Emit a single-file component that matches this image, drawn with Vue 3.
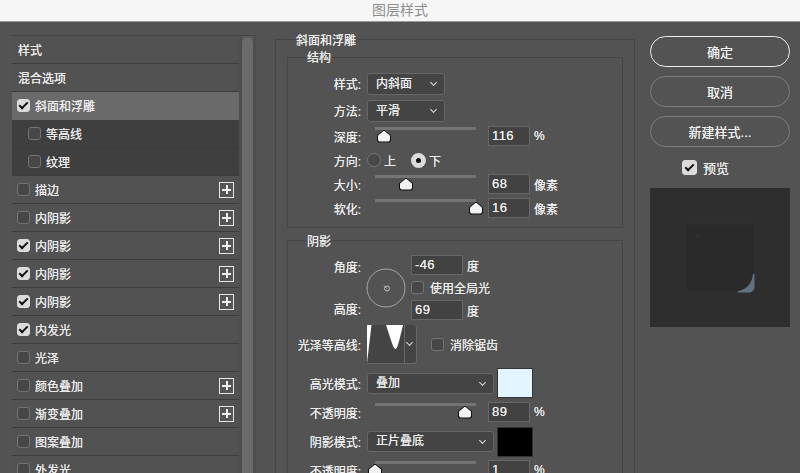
<template>
  <div class="dialog">
    <div class="titlebar">图层样式</div>
    <div class="body">
      <aside class="side">
        <ul class="fx-list">
          <li
            v-for="fx in effects"
            :key="fx.id"
            class="fx"
            :class="{ selected: fx.selected, sub: fx.sub }"
          >
            <span v-if="fx.check !== undefined" class="check" :class="{ on: fx.check }"></span>
            <span class="fx-name">{{ fx.name }}</span>
            <span v-if="fx.plus" class="plus"></span>
          </li>
        </ul>
        <div class="scroll"><div class="scroll-thumb"></div></div>
      </aside>

      <main class="form">
        <div class="legend outer-legend">斜面和浮雕</div>

        <section class="group first">
          <div class="legend">结构</div>
          <div class="row tall">
            <label class="lab">样式:</label>
            <div class="select small">内斜面</div>
          </div>
          <div class="row tall">
            <label class="lab">方法:</label>
            <div class="select small">平滑</div>
          </div>
          <div class="row">
            <label class="lab">深度:</label>
            <div class="slider"><span class="thumb" :style="{ left: '9px' }"></span></div>
            <div class="num">116</div>
            <span class="unit">%</span>
          </div>
          <div class="row">
            <label class="lab">方向:</label>
            <span class="radio"></span>
            <span class="radio-text">上</span>
            <span class="radio on"></span>
            <span class="radio-text">下</span>
          </div>
          <div class="row">
            <label class="lab">大小:</label>
            <div class="slider"><span class="thumb" :style="{ left: '31px' }"></span></div>
            <div class="num">68</div>
            <span class="unit">像素</span>
          </div>
          <div class="row">
            <label class="lab">软化:</label>
            <div class="slider"><span class="thumb" :style="{ left: '101px' }"></span></div>
            <div class="num">16</div>
            <span class="unit">像素</span>
          </div>
        </section>

        <section class="group second">
          <div class="legend">阴影</div>
          <div class="angle">
            <div class="angle-labels">
              <label class="lab">角度:</label>
              <label class="lab">高度:</label>
            </div>
            <svg class="dial" width="40" height="40" viewBox="0 0 40 40">
              <circle cx="20" cy="20" r="19" fill="none" stroke="#a9a9a9" stroke-width="1" />
              <circle cx="21" cy="20.5" r="2.5" fill="none" stroke="#bdbdbd" stroke-width="1" />
              <path d="M18 17.500 L21 20.500" stroke="#bdbdbd" stroke-width="1" />
            </svg>
            <div class="angle-fields">
              <div class="field-line">
                <div class="num wide">-46</div>
                <span class="unit">度</span>
              </div>
              <div class="field-line">
                <span class="check"></span>
                <span class="check-text">使用全局光</span>
              </div>
              <div class="field-line">
                <div class="num wide">69</div>
                <span class="unit">度</span>
              </div>
            </div>
          </div>

          <div class="row contour-row">
            <label class="lab">光泽等高线:</label>
            <div class="contour">
              <svg width="37" height="38" viewBox="0 0 37 38">
                <path d="M0 0 H4.5 L0 38 Z" fill="#fff" />
                <path d="M19 0 H36 C34 8 31 24 28.5 24 C26 24 22 8 19 0 Z" fill="#fff" />
              </svg>
              <div class="contour-arrow"></div>
            </div>
            <span class="check aa"></span>
            <span class="check-text">消除锯齿</span>
          </div>

          <div class="row swatch-row">
            <label class="lab">高光模式:</label>
            <div class="select large">叠加</div>
            <div class="swatch light"></div>
          </div>
          <div class="row opacity-row">
            <label class="lab">不透明度:</label>
            <div class="slider"><span class="thumb" :style="{ left: '90px' }"></span></div>
            <div class="num">89</div>
            <span class="unit">%</span>
          </div>
          <div class="row swatch-row shadow">
            <label class="lab">阴影模式:</label>
            <div class="select large">正片叠底</div>
            <div class="swatch dark"></div>
          </div>
          <div class="row opacity-row">
            <label class="lab">不透明度:</label>
            <div class="slider"><span class="thumb" :style="{ left: '0px' }"></span></div>
            <div class="num">1</div>
            <span class="unit">%</span>
          </div>
        </section>
      </main>

      <aside class="actions">
        <button class="btn primary">确定</button>
        <button class="btn">取消</button>
        <button class="btn">新建样式...</button>
        <div class="preview-toggle">
          <span class="check on big"></span>
          <span class="preview-text">预览</span>
        </div>
        <div class="preview">
          <svg width="140" height="139" viewBox="0 0 140 139">
            <defs>
              <filter id="soft" x="-30%" y="-30%" width="160%" height="160%">
                <feGaussianBlur stdDeviation="0.6" />
              </filter>
            </defs>
            <path d="M36 36 H104 V104 H36 Z" fill="#2b2b2b" stroke="#2c3137" stroke-width="1.5" filter="url(#soft)" />
            <path d="M103.500 38 V90" fill="none" stroke="#4a5864" stroke-width="1.5" filter="url(#soft)" />
            <path d="M46 103.500 H90" fill="none" stroke="#5a6976" stroke-width="1.5" filter="url(#soft)" />
            <path d="M104.500 86 V99 C104.500 102.500 102 104.500 98 104.500 H88 V103 C96 102 102 96 103 86 Z" fill="#62727f" filter="url(#soft)" />
            <circle cx="48" cy="48" r="1" fill="#3e3633" />
          </svg>
        </div>
      </aside>
    </div>
  </div>
</template>

<script setup>
const names = [
  ['样式'],
  ['混合选项'],
  ['斜面和浮雕', true, false, true],
  ['等高线', false, false, false, true],
  ['纹理', false, false, false, true],
  ['描边', false, true],
  ['内阴影', false, true],
  ['内阴影', true, true],
  ['内阴影', true, true],
  ['内阴影', true, true],
  ['内发光', true],
  ['光泽', false],
  ['颜色叠加', false, true],
  ['渐变叠加', false, true],
  ['图案叠加', false],
  ['外发光', false]
]

const effects = names.map(([name, check, plus, selected, sub], id) => ({
  id,
  name,
  check,
  plus,
  selected,
  sub
}))
</script>

<style scoped>
.dialog {
  width: 800px;
  height: 473px;
  overflow: hidden;
  background: #535353;
  color: #ececec;
  font-family: "Liberation Sans", "Noto Sans CJK SC", sans-serif;
  font-size: 12px;
  text-shadow: 0 0 0.5px #ececec;
}
.titlebar {
  height: 21px;
  line-height: 20px;
  background: #f6f6f6;
  border-bottom: 1px solid #9c9c9c;
  color: #8e8e8e;
  font-size: 14px;
  text-align: center;
  text-shadow: none;
}
.body {
  display: flex;
  align-items: flex-start;
  padding-top: 13px;
}

/* left list */
.side {
  display: flex;
  flex: none;
  width: 244px;
  margin-left: 12px;
  background: #4e4e4e;
  border-top: 1px solid #444;
}
.fx-list {
  width: 227px;
  margin: 0;
  padding: 0;
  list-style: none;
}
.fx {
  display: flex;
  align-items: center;
  height: 27px;
  padding-left: 5px;
  padding-right: 5px;
  background: #525252;
  border-bottom: 1px solid #3d3d3d;
}
.fx.selected {
  background: #6a6a6a;
  border-bottom-color: #6a6a6a;
}
.fx.sub {
  padding-left: 16px;
  background: #3f3f3f;
  border-bottom-color: #3b3b3b;
}
.fx-name {
  margin-left: 5px;
}
.fx:nth-child(-n + 2) .fx-name {
  margin-left: 1px;
}
.plus {
  width: 13px;
  height: 14px;
  margin-left: auto;
  border: 1px solid #e6e6e6;
  background:
    linear-gradient(#eee, #eee) center / 9px 2px no-repeat,
    linear-gradient(#eee, #eee) center / 2px 9px no-repeat,
    #555;
}
.scroll {
  width: 11px;
  margin-left: 3px;
  background: #5a5a5a;
}
.scroll-thumb {
  height: 440px;
  margin-top: 2px;
  border-radius: 5px;
  background: #6b6b6b;
}

/* check and radio */
.check {
  position: relative;
  flex: none;
  width: 13px;
  height: 13px;
  box-sizing: border-box;
  border: 1px solid #747474;
  border-radius: 3px;
  background: #474747;
}
.check.on {
  border-color: #dcdcdc;
  background: #dcdcdc;
}
.check.on::after {
  content: "";
  position: absolute;
  left: 3px;
  top: 0;
  width: 3px;
  height: 7px;
  border-right: 2px solid #111;
  border-bottom: 2px solid #111;
  transform: rotate(45deg);
}
.check.big {
  width: 15px;
  height: 15px;
}
.check.big::after {
  left: 4px;
  top: 1px;
}
.check-text {
  margin-left: 6px;
  font-size: 12px;
}
.radio {
  flex: none;
  box-sizing: border-box;
  width: 14px;
  height: 14px;
  border: 1px solid #777;
  border-radius: 50%;
  background: #474747;
}
.radio.on {
  margin-left: 15px;
  width: 15px;
  height: 15px;
  border: 5px solid #dcdcdc;
  background: #111;
}
.radio-text {
  margin-left: 3px;
  width: 12px;
}

/* middle form */
.form {
  flex: none;
  box-sizing: border-box;
  width: 360px;
  margin-left: 19px;
  margin-top: 4px;
  padding: 0 0 0 11px;
  border: 1px solid #464646;
  border-bottom: 0;
}
.legend {
  width: max-content;
  height: 16px;
  line-height: 16px;
  margin-top: -8px;
  margin-left: 18px;
  padding: 0 1px;
  background: #535353;
  font-size: 12px;
}
.outer-legend {
  margin-top: -7px;
  margin-left: 8px;
}
.group {
  width: 334px;
  border: 1px solid #464646;
}
.group.first {
  height: 169px;
  margin-top: 8px;
}
.group.first .legend {
  margin-bottom: 4px;
}
.group.second {
  margin-top: 12px;
  border-bottom: 0;
}
.group.second .legend {
  margin-top: -7px;
}
.row {
  display: flex;
  align-items: center;
  height: 24px;
}
.row.tall {
  height: 27px;
}
.lab {
  flex: none;
  box-sizing: border-box;
  width: 75px;
  padding-right: 2px;
  text-align: right;
  white-space: nowrap;
}
.row > .lab + .radio,
.row > .lab + .select,
.row > .lab + .contour {
  margin-left: 4px;
}
.select {
  position: relative;
  flex: none;
  box-sizing: border-box;
  height: 22px;
  line-height: 20px;
  padding-left: 8px;
  border: 1px solid #666;
  border-radius: 3px;
  background: #444;
  font-size: 12px;
}
.select.small {
  width: 78px;
}
.select.large {
  width: 127px;
  height: 21px;
  line-height: 19px;
}
.select::after,
.contour-arrow::after {
  content: "";
  position: absolute;
  right: 8px;
  top: 6px;
  width: 4px;
  height: 4px;
  border-right: 1px solid #ddd;
  border-bottom: 1px solid #ddd;
  transform: rotate(45deg);
}
.slider {
  position: relative;
  flex: none;
  width: 101px;
  height: 20px;
  margin-left: 12px;
  margin-top: 1px;
}
.slider::before {
  content: "";
  position: absolute;
  left: 0;
  top: 0;
  width: 100%;
  height: 3px;
  background: #747474;
}
.thumb {
  position: absolute;
  top: 3px;
  width: 14px;
  height: 13px;
  margin-left: -7px;
  background: #111;
  clip-path: polygon(50% 0, 100% 45%, 100% 88%, 88% 100%, 12% 100%, 0 88%, 0 45%);
}
.thumb::after {
  content: "";
  position: absolute;
  left: 1px;
  top: 1px;
  width: 12px;
  height: 11px;
  background: #f2f2f2;
  clip-path: polygon(50% 0, 100% 45%, 100% 88%, 88% 100%, 12% 100%, 0 88%, 0 45%);
}
.num {
  flex: none;
  box-sizing: border-box;
  width: 42px;
  height: 20px;
  line-height: 18px;
  margin-left: 12px;
  padding-left: 3px;
  border: 1px solid #676767;
  background: #424242;
  font-size: 13px;
  letter-spacing: 0.4px;
}
.num.wide {
  width: 52px;
  margin-left: 0;
}
.unit {
  margin-left: 4px;
  font-size: 12px;
}

/* angle block */
.angle {
  display: flex;
  height: 65px;
  margin-top: 5px;
}
.angle-labels {
  display: flex;
  flex-direction: column;
  justify-content: space-between;
  padding: 3px 0 3px;
}
.dial {
  flex: none;
  margin-left: 3px;
  margin-top: 13px;
}
.angle-fields {
  display: flex;
  flex-direction: column;
  justify-content: space-between;
  margin-left: 5px;
}
.field-line {
  display: flex;
  align-items: center;
  height: 20px;
}
.contour-row {
  height: 39px;
  margin-top: 5px;
}
.contour {
  display: flex;
  flex: none;
  box-sizing: border-box;
  width: 50px;
  height: 39px;
  border: 1px solid #666;
  border-top: 0;
  border-left: 0;
  border-radius: 0 3px 3px 0;
  background: #444;
}
.contour-arrow {
  position: relative;
  flex: 1;
  border-left: 1px solid #666;
}
.contour-arrow::after {
  right: 4px;
  top: 15px;
}
.aa {
  margin-left: 14px;
}
.swatch-row {
  height: 30px;
  margin-top: 4px;
}
.swatch-row.shadow {
  height: 29px;
  margin-top: 1px;
}
.opacity-row {
  height: 28px;
}
.swatch {
  flex: none;
  box-sizing: border-box;
  width: 36px;
  height: 30px;
  margin-left: 3px;
  border: 1px solid #333;
}
.swatch.light {
  background: #e2f5ff;
}
.swatch.dark {
  background: #000;
}

/* right column */
.actions {
  display: flex;
  flex: none;
  flex-direction: column;
  width: 140px;
  margin-left: 15px;
  margin-top: 1px;
}
.btn {
  box-sizing: border-box;
  height: 31px;
  margin-bottom: 9px;
  padding: 0;
  border: 1px solid #7e7e7e;
  border-radius: 16px;
  background: transparent;
  color: #eee;
  font-family: inherit;
  font-size: 13px;
  text-shadow: inherit;
}
.btn.primary {
  border: 1.5px solid #eee;
}
.preview-toggle {
  display: flex;
  align-items: center;
  height: 15px;
  margin-top: 4px;
  padding-left: 32px;
}
.preview-text {
  margin-left: 6px;
  font-size: 13px;
}
.preview {
  height: 139px;
  margin-top: 13px;
  background: #2e2e2e;
}
.preview svg {
  display: block;
}
</style>

<style>
html,
body {
  margin: 0;
  background: #535353;
}
</style>
